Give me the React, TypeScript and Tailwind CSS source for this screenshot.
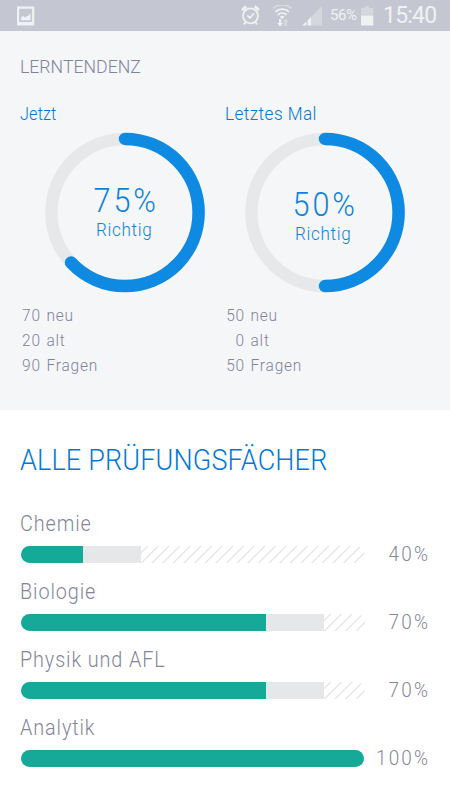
type Trend = {
  title: string;
  percent: number;
  arc: number;
  neu: number;
  alt: number;
  total: number;
};

type Subject = {
  name: string;
  percent: number;
  done: number;
  open: number;
};

const trends: Trend[] = [
  { title: "Jetzt", percent: 75, arc: 63.1, neu: 70, alt: 20, total: 90 },
  { title: "Letztes Mal", percent: 50, arc: 50, neu: 50, alt: 0, total: 50 },
];

// done / open are bar widths in px, the rest of the bar is hatched
const subjects: Subject[] = [
  { name: "Chemie", percent: 40, done: 62, open: 58 },
  { name: "Biologie", percent: 70, done: 245, open: 58 },
  { name: "Physik und AFL", percent: 70, done: 245, open: 58 },
  { name: "Analytik", percent: 100, done: 343, open: 0 },
];

const BAR_WIDTH = 344;
const HATCH_STEP = 10.65;

function StatusBar() {
  return (
    <header className="flex h-[31px] items-center bg-[#c4c7d1] pl-[17px] pr-3 font-normal text-[#f0f1f4]">
      <svg width="18" height="20" viewBox="0 0 18 20" fill="currentColor">
        <path fillRule="evenodd" d="M0 0.5h17.3v19H0zM2.2 2.7v13.2h12.9V2.7z" />
        <path d="M4 14.3v-2.5l2-2 2 1.8 2.2-1.5 1.3-.3 1.3-2h.7v6.5z" />
      </svg>
      <svg
        className="ml-auto"
        width="20"
        height="21"
        viewBox="0 0 20 21"
        fill="none"
        stroke="currentColor"
      >
        <circle cx="9.5" cy="10.8" r="7.5" strokeWidth="1.8" />
        <path d="M1.2 5.2a11 11 0 0 1 4.2-3.7M17.8 5.2a11 11 0 0 0-4.2-3.7" strokeWidth="2.6" />
        <path d="M4.6 17l-1.6 2.6M14.4 17l1.6 2.6" strokeWidth="2" />
        <path d="M6.3 10.3l2.6 2.6 4.2-4.5" strokeWidth="1.8" />
      </svg>
      <svg
        className="ml-[11px]"
        width="21"
        height="22"
        viewBox="0 0 21 22"
        fill="none"
        stroke="currentColor"
        strokeWidth="1.8"
      >
        <path d="M.8 3.4a14.5 14.5 0 0 1 18.8 0" opacity=".5" />
        <path d="M3.4 6.7a10.5 10.5 0 0 1 13.6 0M5.8 9.8a6.8 6.8 0 0 1 8.8 0" />
        <path d="M7.8 12a3.4 3.4 0 0 1 4.8 0l-2.4 2z" fill="currentColor" stroke="none" />
        <path d="M7 14h2.2v4h2L8.1 21.6 5 18h2z" fill="currentColor" stroke="none" />
        <path
          d="M12.4 21v-4h-1.7l2.9-3.3 2.9 3.3h-1.7v4z"
          fill="currentColor"
          stroke="none"
          opacity=".5"
        />
      </svg>
      <svg className="ml-[9px]" width="21" height="20" viewBox="0 0 21 20" fill="currentColor">
        <path d="M10 10L20 0v19.5H10z" opacity=".4" />
        <path d="M0 19.5l4.4-4v4zM5.6 14.4L9.4 10.6v8.9H5.6z" />
      </svg>
      <span className="ml-[7px] w-[28px] whitespace-nowrap text-[15px] leading-[33px] tracking-[-0.4px]">
        56%
      </span>
      <svg className="ml-[3px]" width="13" height="20" viewBox="0 0 13 20" fill="currentColor">
        <path d="M0 2h4V0h4v2h4.3v8H0z" opacity=".4" />
        <path d="M0 9.7h12.3v9.8H0z" />
      </svg>
      <span className="ml-[9px] w-[55px] whitespace-nowrap text-[23px] leading-[34px] tracking-[-0.8px]">
        15:40
      </span>
    </header>
  );
}

function Ring({ percent, arc, shifted }: { percent: number; arc: number; shifted: boolean }) {
  return (
    <div className="grid h-[161px] w-40 place-items-center">
      <svg
        className="col-start-1 row-start-1"
        width="160"
        height="161"
        viewBox="0 0 160 161"
        fill="none"
        strokeWidth="12.5"
      >
        <circle cx="80" cy="80.5" r="73.6" stroke="#e7e8ea" />
        <circle
          cx="80"
          cy="80.5"
          r="73.6"
          stroke="#0f8ae2"
          strokeLinecap="round"
          pathLength={100}
          strokeDasharray={`${arc} 100`}
          transform="rotate(-90 80 80.5)"
        />
      </svg>
      <div
        className={`col-start-1 row-start-1 flex flex-col items-center gap-1 text-[#0f82dc] ${
          shifted ? "pt-2" : "pl-0.5"
        }`}
      >
        <span className="scale-x-90 text-[34px] leading-[30px] tracking-[3.2px]">{percent}%</span>
        <span className="mr-[3px] scale-x-90 text-[19px] leading-[22px] tracking-[0.7px]">
          Richtig
        </span>
      </div>
    </div>
  );
}

function Stat({ value, label }: { value: number; label: string }) {
  return (
    <li className="flex gap-[6px]">
      <span className="w-[21px] text-right">{value}</span>
      <span>{label}</span>
    </li>
  );
}

function TrendCard({ trend, second }: { trend: Trend; second: boolean }) {
  return (
    <div>
      <h2
        className={`origin-left text-[18px] leading-[19px] text-[#0078db] ${
          second ? "scale-x-95 tracking-[0.5px]" : "scale-x-90 tracking-[0.2px]"
        }`}
      >
        {trend.title}
      </h2>
      <div className={second ? "mt-[9px] pl-5" : "mt-[9px] pl-[25px]"}>
        <Ring percent={trend.percent} arc={trend.arc} shifted={second} />
      </div>
      <ul
        className={`mt-[10px] origin-left scale-x-[0.91] text-[17px] leading-[25px] tracking-[0.9px] text-[#7f849b] ${
          second ? "pl-px" : "pl-0.5"
        }`}
      >
        <Stat value={trend.neu} label="neu" />
        <Stat value={trend.alt} label="alt" />
        <Stat value={trend.total} label="Fragen" />
      </ul>
    </div>
  );
}

function Hatch({ width }: { width: number }) {
  const count = Math.ceil(width / HATCH_STEP) + 2;
  return (
    <svg width={width} height="17" stroke="#e2e3e4" strokeWidth="1.2">
      {Array.from({ length: count }, (_, i) => {
        const x = (i - 1) * HATCH_STEP;
        return <line key={i} x1={x - 0.6} y1="18" x2={x + 18.4} y2="-1" />;
      })}
    </svg>
  );
}

function SubjectRow({ subject }: { subject: Subject }) {
  const rest = BAR_WIDTH - subject.done - subject.open;
  // a finished subject has no hatched part, so its bar ends with the fill
  const full = subject.percent === 100;
  return (
    <li>
      <h3 className="origin-left scale-x-90 text-[22px] leading-[26px] tracking-[1px] text-[#83879b]">
        {subject.name}
      </h3>
      <div className="mt-[9px] flex h-[17px] items-center justify-between">
        <div
          className="ml-px flex h-[17px] overflow-hidden rounded-full"
          style={{ width: full ? subject.done : BAR_WIDTH }}
        >
          <div className="bg-[#15aa97]" style={{ width: subject.done }} />
          <div className="bg-[#e6e7e9]" style={{ width: subject.open }} />
          {!full && <Hatch width={rest} />}
        </div>
        <span className="origin-right scale-x-[0.9] text-[21px] leading-[17px] tracking-[2.4px] text-[#83879b]">
          {subject.percent}%
        </span>
      </div>
    </li>
  );
}

export default function App() {
  return (
    <div className="h-[800px] w-[450px] overflow-hidden bg-white font-['Roboto',sans-serif] font-light">
      <StatusBar />
      <section className="h-[379px] bg-[#f5f6f8] px-5 pt-[26px]">
        <h1 className="origin-left scale-x-[0.93] text-[19px] leading-5 text-[#7f849b]">
          LERNTENDENZ
        </h1>
        <div className="mt-[27px] grid grid-cols-2">
          {trends.map((t, i) => (
            <TrendCard key={t.title} trend={t} second={i === 1} />
          ))}
        </div>
      </section>
      <section className="px-5 pt-[34px]">
        <h1 className="origin-left scale-x-[0.93] text-[29px] leading-[33px] tracking-[0.2px] text-[#0078db]">
          ALLE PRÜFUNGSFÄCHER
        </h1>
        <ul className="mt-[34px] flex flex-col gap-4">
          {subjects.map((s) => (
            <SubjectRow key={s.name} subject={s} />
          ))}
        </ul>
      </section>
    </div>
  );
}
